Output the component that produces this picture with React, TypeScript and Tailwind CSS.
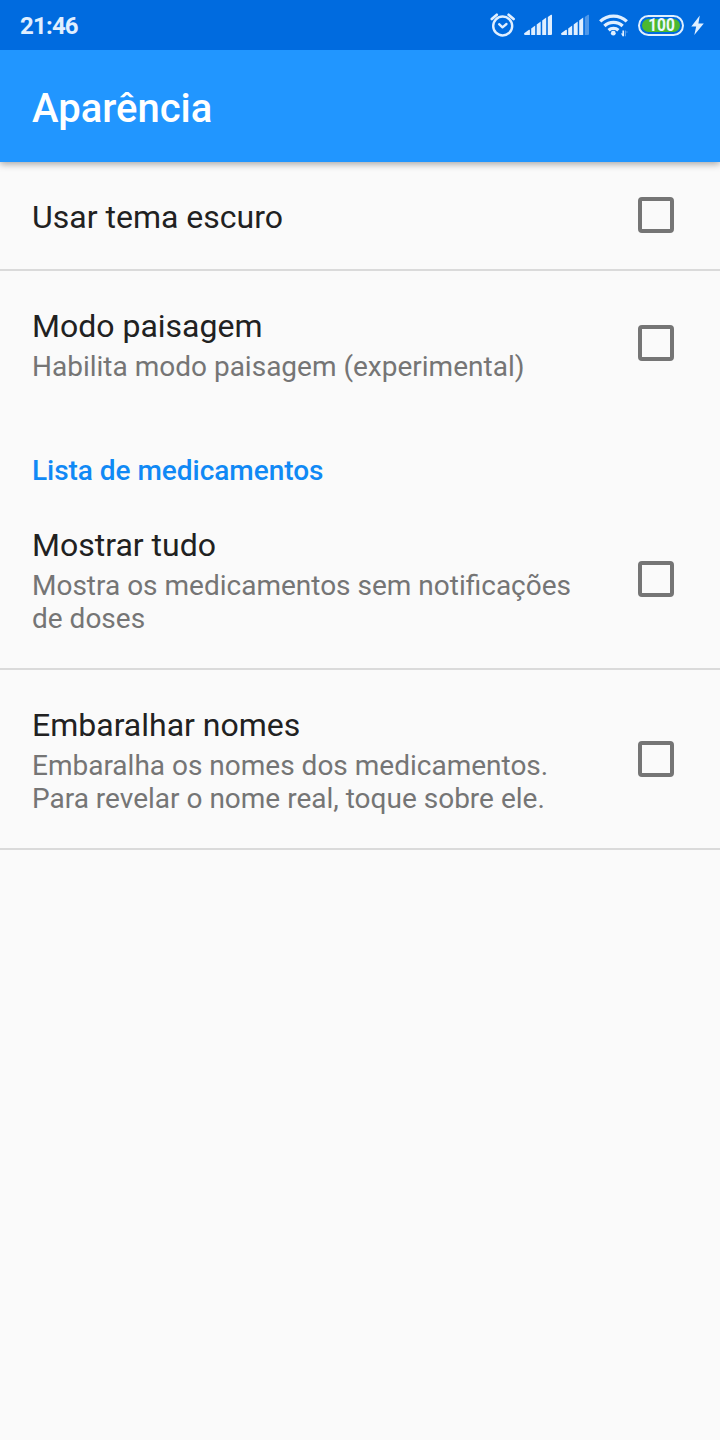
import React from "react";
import clsx from "clsx";

function AlarmIcon() {
  return (
    <svg width="26" height="28" viewBox="0 0 26 28" fill="none" stroke="#e0efff" strokeLinecap="round">
      <circle cx="12.7" cy="15" r="9.5" strokeWidth="2.4" />
      <path d="M9.1 13.2l3.4 3.2 4-3.4" strokeWidth="2.3" strokeLinejoin="round" />
      <path d="M1.8 8l5-4.2M18.6 3.8l5 4.2" strokeWidth="2.7" />
    </svg>
  );
}

function SignalIcon({ weak = false }: { weak?: boolean }) {
  return (
    <svg width="28" height="28" viewBox="0 0 28 28" fill="#e0efff">
      <path d="M0.5 22L5 18.8a.6.6 0 0 1 .9.5V24H1.2A1.1 1.1 0 0 1 .5 22z" />
      <path d="M7.2 17.4l4-2.8V24h-4z" />
      <path d="M12.7 13.4l4-2.8V24h-4z" />
      <path d="M18.2 9.4l4-2.8V24h-4z" />
      <path d="M23.8 6L27 3.8a.6.6 0 0 1 1 .5V23a1 1 0 0 1-1 1h-3.2z" opacity={weak ? 0.35 : 1} />
    </svg>
  );
}

function WifiIcon() {
  return (
    <svg width="30" height="28" viewBox="0 0 30 28" fill="none" stroke="#e0efff" strokeWidth="3.3">
      <path d="M1.2 10.4a19.4 19.4 0 0 1 26.6 0" />
      <path d="M5.4 15a13 13 0 0 1 18.2 0" />
      <path d="M9.6 19.2a7.2 7.2 0 0 1 9.8 0" />
      <circle cx="14.3" cy="22.2" r="2.4" fill="#e0efff" stroke="none" />
      <path d="M24.2 19.6v5.6" strokeWidth="1.6" />
      <path d="M21.8 22.6h2.4v2.8z" fill="#e0efff" stroke="none" />
      <path d="M26.4 19.6v5.6M27.2 21h1.4" strokeWidth="1.2" opacity="0.4" />
    </svg>
  );
}

function Battery() {
  return (
    <div className="flex h-[21px] w-[46px] rounded-full border-2 border-[#e0efff] p-[2px]">
      <div className="flex flex-1 items-center justify-center rounded-full bg-[#4cb82f] text-[18px] leading-none font-bold text-[#eef7ff]">
        <span className="scale-x-[0.86]">100</span>
      </div>
    </div>
  );
}

function BoltIcon() {
  return (
    <svg width="13" height="21" viewBox="0 0 13 21" fill="#e0efff">
      <path d="M8.8 0.5L0.3 11.6h4.9L3.3 20 12.8 8.6H7.4z" />
    </svg>
  );
}

type RowProps = {
  title: string;
  summary?: string;
  className?: string;
};

function CheckRow({ title, summary, className }: RowProps) {
  return (
    <label className={clsx("flex items-center justify-between pl-8 pr-[46px]", className)}>
      <div className="w-[560px] pt-[3px]">
        <p className="text-[32px] leading-[38px] text-[#212121]">{title}</p>
        {summary && (
          <p className="mt-[5px] text-[28px] leading-[33px] whitespace-pre-line text-[#757575]">{summary}</p>
        )}
      </div>
      <span className="size-9 rounded-[4px] border-4 border-[#757575]" />
    </label>
  );
}

function App() {
  return (
    <main className="min-h-[1440px] w-[720px] bg-[#fafafa] font-['Roboto',sans-serif]">
      <div className="relative z-10 flex h-[50px] items-center bg-[#006bdf] pl-5">
        <p className="flex-1 pt-0.5 text-[24px] leading-7 font-bold tracking-[-0.8px] text-[#e0efff]">21:46</p>
        <div className="flex items-center pr-4">
          <AlarmIcon />
          <div className="ml-2 flex gap-[9px]">
            <SignalIcon />
            <SignalIcon weak />
          </div>
          <div className="ml-[10px] mr-[9px]">
            <WifiIcon />
          </div>
          <Battery />
          <div className="ml-[7px]">
            <BoltIcon />
          </div>
        </div>
      </div>
      <header className="relative flex h-28 items-center bg-[#2196ff] px-8 pt-1.5 shadow-[0_2px_7px_rgba(0,0,0,0.35)]">
        <h1 className="text-[40px] leading-[48px] font-medium text-white">Aparência</h1>
      </header>

      <CheckRow title="Usar tema escuro" className="h-[109px] border-b-2 border-[#dadada] pb-px" />
      <CheckRow
        title="Modo paisagem"
        summary="Habilita modo paisagem (experimental)"
        className="h-36"
      />
      <h2 className="flex h-[75px] items-center pl-8 pt-9 text-[28px] leading-[33px] font-medium tracking-[-0.03px] text-[#1089f5]">
        Lista de medicamentos
      </h2>
      <CheckRow
        title="Mostrar tudo"
        summary={"Mostra os medicamentos sem notificações\nde doses"}
        className="h-[180px] border-b-2 border-[#dadada]"
      />
      <CheckRow
        title="Embaralhar nomes"
        summary={"Embaralha os nomes dos medicamentos.\nPara revelar o nome real, toque sobre ele."}
        className="h-[180px] border-b-2 border-[#dadada]"
      />
    </main>
  );
}

export default App;
